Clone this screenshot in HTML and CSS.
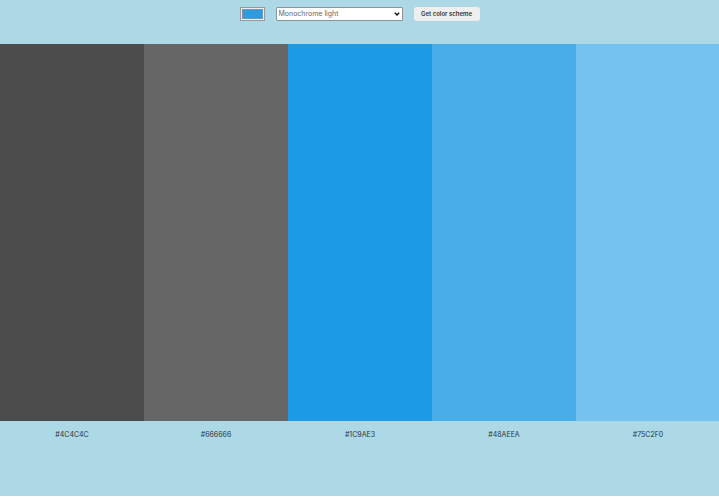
FILE: index.html
```html
<!DOCTYPE html>
<html lang="en">
<head>
<meta charset="utf-8">
<title>Color scheme generator</title>
<link rel="stylesheet" href="styles.css">
</head>
<body>
<form class="controls">
  <input class="seed" type="color" value="#2f9be0" aria-label="Seed color">
  <div class="picker">
    <select class="mode" aria-label="Scheme mode"><option>Monochrome light</option></select>
    <svg class="chevron" viewBox="0 0 6 4" aria-hidden="true"><path d="M.8.8 3 3 5.200.8" fill="none" stroke="#111" stroke-width="1.4"/></svg>
  </div>
  <button class="submit" type="button">Get color scheme</button>
</form>
<main class="scheme">
  <div class="swatch dark"></div>
  <div class="swatch gray"></div>
  <div class="swatch blue"></div>
  <div class="swatch sky"></div>
  <div class="swatch pale"></div>
</main>
<footer class="codes">
  <span>#4C4C4C</span>
  <span>#666666</span>
  <span>#1C9AE3</span>
  <span>#48AEEA</span>
  <span>#75C2F0</span>
</footer>
</body>
</html>
```
FILE: styles.css
```css
* { box-sizing: border-box; }
html { background: #fff; }
body {
  margin: 0;
  height: calc(100vh - 1px);
  display: flex;
  flex-direction: column;
  overflow: hidden;
  background: #add8e6;
  font-family: Inter, sans-serif;
  color: #2b353a;
}
.controls {
  height: 44px;
  padding-top: 7px;
  display: flex;
  justify-content: center;
  align-items: flex-start;
  gap: 11px;
}
.seed {
  width: 25px;
  height: 14px;
  padding: 1px;
  border: 1px solid #949ca0;
  background: #efefef;
}
.seed::-webkit-color-swatch-wrapper { padding: 0; }
.seed::-webkit-color-swatch { border: 1px solid #6d96b0; }
.picker { position: relative; }
.mode {
  display: block;
  width: 127px;
  height: 14px;
  padding: 0 2px;
  appearance: none;
  border: 1px solid #8b9498;
  border-radius: 1px;
  background: #fff;
  color: #666;
  font: 7px/12px Inter, sans-serif;
}
.chevron {
  position: absolute;
  top: 5px;
  right: 3px;
  width: 6px;
  height: 4px;
  pointer-events: none;
}
.submit {
  width: 66px;
  height: 14px;
  padding: 0;
  border: 0;
  border-radius: 3px;
  background: #efefef;
  color: #333;
  font: 600 6px/14px Inter, sans-serif;
}
.scheme,
.codes {
  width: calc(100% + 1px);
  display: grid;
  grid-template-columns: repeat(5, 1fr);
}
.scheme { flex: 1; }
.dark { background: #4c4c4c; }
.gray { background: #666666; }
.blue { background: #1c9ae3; }
.sky { background: #48aeea; }
.pale { background: #75c2f0; }
.codes {
  height: 75px;
  padding-top: 8px;
  text-align: center;
  font-size: 7px;
  line-height: 12px;
}
```
